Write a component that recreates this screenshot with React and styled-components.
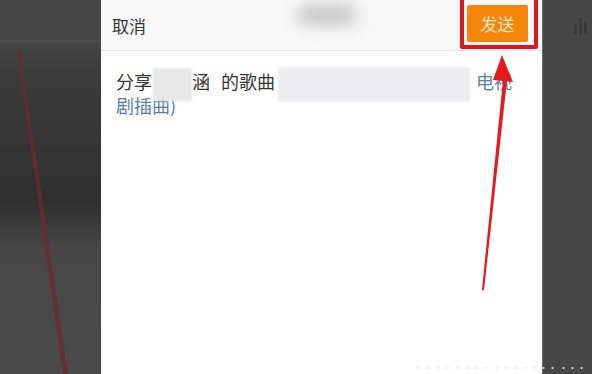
import styled, { createGlobalStyle } from 'styled-components';

const GlobalStyle = createGlobalStyle`
  html, body {
    margin: 0;
    padding: 0;
    background: #444;
  }
  body {
    font-family: "Noto Sans CJK SC", "Noto Sans", sans-serif;
  }
`;

const Page = styled.div`
  position: relative;
  width: 592px;
  height: 374px;
  display: flex;
  overflow: hidden;
`;

const Shade = styled.div`
  width: ${p => p.$width}px;
  flex-shrink: 0;
  background: linear-gradient(
    to bottom,
    #464646 0px,
    #464646 40px,
    #555 41px,
    #464646 43px,
    #3c3c3c 70px,
    #303030 200px,
    #474747 250px,
    #4a4a4a 374px
  );
`;

const RightShade = styled.div`
  width: 50px;
  flex-shrink: 0;
  background: #474747;
  border-left: 1px solid #6a6a6a;
  display: flex;
  justify-content: flex-end;
  padding: 18px 4px 0 0;
  box-sizing: border-box;
`;

const Sheet = styled.div`
  flex: 1;
  background: #fff;
  display: flex;
  flex-direction: column;
`;

const Header = styled.div`
  height: 50px;
  background: #f8f8f8;
  border-bottom: 1px solid #e6e6e6;
  display: flex;
  align-items: center;
  justify-content: space-between;
  padding: 0 14px 0 11px;
`;

const Cancel = styled.span`
  font-size: 17px;
  color: #333;
`;

const BlurTitle = styled.div`
  width: 60px;
  height: 20px;
  margin: -20px 0 0 40px;
  background: #c4c4c4;
  border-radius: 10px;
  filter: blur(8px);
`;

const SendButton = styled.button`
  width: 61px;
  height: 37px;
  margin-top: -3px;
  border: none;
  border-radius: 2px;
  background: #f6860b;
  color: #fde6c0;
  font-family: inherit;
  font-size: 17px;
  padding: 0;
`;

const Body = styled.div`
  padding: 19px 16px 0 15px;
  font-size: 18px;
  line-height: 22px;
  color: #333;
  word-spacing: 7px;
`;

const Redact = styled.span`
  display: inline-block;
  width: ${p => p.$w}px;
  height: ${p => p.$h}px;
  margin: ${p => -(p.$h - 20) / 2}px ${p => p.$mr}px ${p => -(p.$h - 20) / 2}px ${p => p.$ml}px;
  vertical-align: middle;
  background: ${p => p.$bg};
  filter: blur(1px);
`;

const Link = styled.span`
  color: #5a7fa3;
`;

const Highlight = styled.div`
  position: absolute;
  left: 460px;
  top: -4px;
  width: 70px;
  height: 45px;
  border: 4px solid #e3141b;
  border-radius: 2px;
`;

const Overlay = styled.svg`
  position: absolute;
  left: 0;
  top: 0;
  pointer-events: none;
`;

const Watermark = styled.div`
  position: absolute;
  right: 6px;
  bottom: 1px;
  font-size: 9px;
  line-height: 10px;
  color: #e2e2e2;
  white-space: nowrap;
`;

function App() {
  return (
    <>
      <GlobalStyle />
      <Page>
        <Shade $width={101} />
        <Sheet>
          <Header>
            <Cancel>取消</Cancel>
            <BlurTitle />
            <SendButton>发送</SendButton>
          </Header>
          <Body>
            分享<Redact $w={39} $h={33} $ml={1} $mr={0} $bg="#e7e7e7" />涵 的歌曲
            <Redact $w={192} $h={35} $ml={3} $mr={6} $bg="#eceef0" />
            <Link>电视</Link>
            <br />
            <Link>剧插曲)</Link>
          </Body>
        </Sheet>
        <RightShade>
          <svg width="14" height="16" viewBox="0 0 14 16">
            <rect x="0" y="5" width="3" height="11" fill="#3a3a3a" />
            <rect x="5" y="0" width="3" height="16" fill="#3a3a3a" />
            <rect x="10" y="3" width="3" height="13" fill="#3a3a3a" />
          </svg>
        </RightShade>
        <Highlight />
        <Overlay width="592" height="374" viewBox="0 0 592 374">
          <path d="M17 50 L20 50 L68 374 L63 374 Z" fill="#6e2b2e" opacity="0.8" />
          <path d="M482 290 L484 290 L507 80 L503 80 Z" fill="#e41a1f" />
          <path d="M502 55 L513 82 L493 80 Z" fill="#e41a1f" />
        </Overlay>
        <Watermark>·· ·· ···· ·· ····· ···</Watermark>
      </Page>
    </>
  );
}

export default App;
